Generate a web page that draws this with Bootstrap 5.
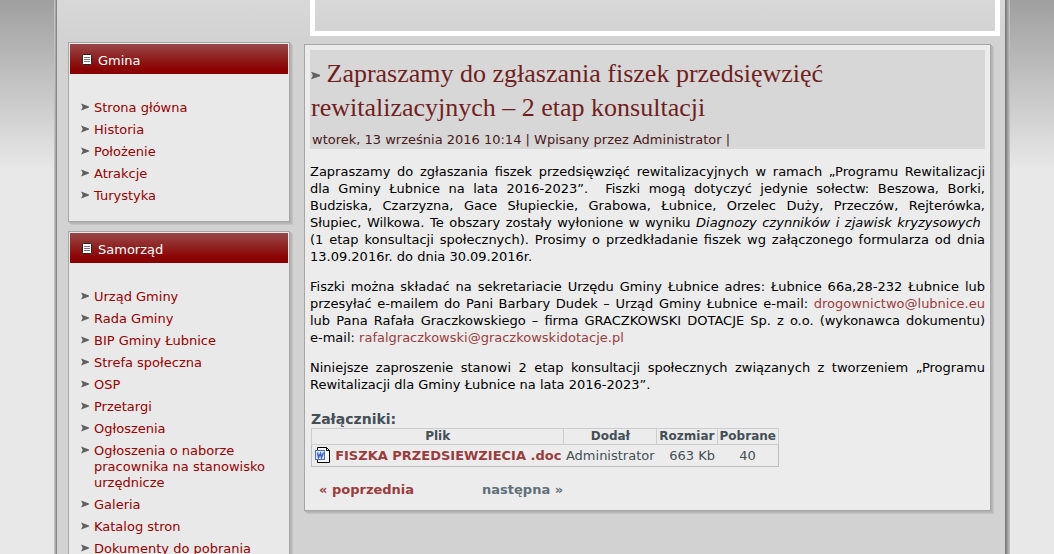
<!DOCTYPE html>
<html lang="pl">
<head>
<meta charset="utf-8">
<meta name="viewport" content="width=device-width, initial-scale=1">
<title>Gmina Łubnice</title>
<link href="https://cdn.jsdelivr.net/npm/bootstrap@5.3.0/dist/css/bootstrap.min.css" rel="stylesheet">
<style>
html::-webkit-scrollbar{display:none}
body{font-family:Verdana,"DejaVu Sans",sans-serif;font-size:13px;line-height:17px;color:#000;background:#e8e8e8 linear-gradient(#9f9f9f,#e8e8e8 170px) no-repeat}
a{color:#9b3c3c;text-decoration:none}
.site{margin:0 49px 0 57px;padding:0 5px 0 11px;min-height:100vh;background:#d2d2d2 linear-gradient(#d8d8d8,#d2d2d2 40px) no-repeat;box-shadow:-1px 0 #868686,-2px 0 #a8a8a8,-3px 0 #c0c0c0,1px 0 #777,2px 0 #8c8c8c,3px 0 #9c9c9c,4px 0 #acacac,5px 0 #bebebe}
.banner{margin-left:242px;height:36px;border:5px solid #fff;border-top:0}
.side{flex:0 0 222px;padding-top:6px}
.box{border:1px solid #a6a6a6;box-shadow:1px 1px #b2b2b2,2px 2px #b9b9b9,3px 3px #c2c2c2}
.side .box{background:#e9e9e9;margin-bottom:9px;padding:1px}
.side h3{height:30px;font-size:13px;line-height:24px;padding:4px 0 0 12px;color:#fff;background:linear-gradient(#974848,#8a0000 85%);margin:0;gap:6px}
.side h3 svg{margin-bottom:3px}
.side ul{padding:26px 8px 16px 11px}
.side li{gap:5px;line-height:16px;margin-bottom:6px}
.side li:last-child{margin-bottom:0}
.side li svg{flex:none;margin-top:3px}
.side li a{color:#990000}
.main-col{padding:8px 9px 0 0;margin-left:14px;min-width:0}
.main-col .box{background:#ececec;padding:5px}
.article-head{background:#d7d7d7;padding:7px 1px 1px;margin-bottom:14px;color:#4a1818}
.article-head h1{font-family:"Palatino Linotype","Liberation Serif",serif;font-size:26px;line-height:34px;font-weight:400;color:#701f1f;margin:0 0 6px}
.article-head h1 svg{vertical-align:2px}
.article-head p{margin:0;padding-left:1px}
.content-text p{text-align:justify;margin-bottom:13px}
.files{color:#444f56}
.files h2{font-size:14px;line-height:18px;font-weight:700;margin:17px 0 0 1px}
.files table{border-collapse:collapse;margin-left:1px;border:1px solid #bdbdbd;width:468px}
.files th{border:1px solid #ccc;text-align:center;font-size:12px;line-height:15px;padding:0 2px}
.files td{line-height:21px;padding:0 2px;white-space:nowrap}
.files td svg{vertical-align:-4px}
.pager{gap:68px;padding:14px 9px 7px;font-weight:700;color:#5f707a}
</style>
</head>
<body>
<svg class="d-none"><symbol id="arrow" viewBox="0 0 7 7"><path d="M0 0.500 7 3v1L0 6.500l1.500-3z" fill="#606060"/></symbol>
<symbol id="page" viewBox="0 0 10 11"><rect x=".5" y=".5" width="9" height="10" rx="1" fill="#fff" stroke="#222"/><path d="M2 3.500h6M2 5.500h6M2 7.500h6" stroke="#777"/></symbol></svg>
<div class="site">
<header class="banner"></header>
<div class="d-flex align-items-start">
<aside class="side">
<nav class="box"><h3 class="d-flex align-items-center"><svg width="10" height="11"><use href="#page"/></svg>Gmina</h3>
<ul class="list-unstyled m-0">
<li class="d-flex"><svg width="8" height="8"><use href="#arrow"/></svg><a href="#">Strona główna</a></li>
<li class="d-flex"><svg width="8" height="8"><use href="#arrow"/></svg><a href="#">Historia</a></li>
<li class="d-flex"><svg width="8" height="8"><use href="#arrow"/></svg><a href="#">Położenie</a></li>
<li class="d-flex"><svg width="8" height="8"><use href="#arrow"/></svg><a href="#">Atrakcje</a></li>
<li class="d-flex"><svg width="8" height="8"><use href="#arrow"/></svg><a href="#">Turystyka</a></li>
</ul></nav>
<nav class="box"><h3 class="d-flex align-items-center"><svg width="10" height="11"><use href="#page"/></svg>Samorząd</h3>
<ul class="list-unstyled m-0">
<li class="d-flex"><svg width="8" height="8"><use href="#arrow"/></svg><a href="#">Urząd Gminy</a></li>
<li class="d-flex"><svg width="8" height="8"><use href="#arrow"/></svg><a href="#">Rada Gminy</a></li>
<li class="d-flex"><svg width="8" height="8"><use href="#arrow"/></svg><a href="#">BIP Gminy Łubnice</a></li>
<li class="d-flex"><svg width="8" height="8"><use href="#arrow"/></svg><a href="#">Strefa społeczna</a></li>
<li class="d-flex"><svg width="8" height="8"><use href="#arrow"/></svg><a href="#">OSP</a></li>
<li class="d-flex"><svg width="8" height="8"><use href="#arrow"/></svg><a href="#">Przetargi</a></li>
<li class="d-flex"><svg width="8" height="8"><use href="#arrow"/></svg><a href="#">Ogłoszenia</a></li>
<li class="d-flex"><svg width="8" height="8"><use href="#arrow"/></svg><a href="#">Ogłoszenia o naborze pracownika na stanowisko urzędnicze</a></li>
<li class="d-flex"><svg width="8" height="8"><use href="#arrow"/></svg><a href="#">Galeria</a></li>
<li class="d-flex"><svg width="8" height="8"><use href="#arrow"/></svg><a href="#">Katalog stron</a></li>
<li class="d-flex"><svg width="8" height="8"><use href="#arrow"/></svg><a href="#">Dokumenty do pobrania</a></li>
</ul></nav>
</aside>
<main class="main-col flex-grow-1"><article class="box">
<div class="article-head">
<h1><svg width="9" height="9" viewBox="0 0 7 7"><use href="#arrow" width="7" height="7"/></svg> Zapraszamy do zgłaszania fiszek przedsięwzięć<br>rewitalizacyjnych – 2 etap konsultacji</h1>
<p>wtorek, 13 września 2016 10:14 | Wpisany przez Administrator |</p>
</div>
<div class="content-text">
<p>Zapraszamy do zgłaszania fiszek przedsięwzięć rewitalizacyjnych w ramach „Programu Rewitalizacji dla Gminy Łubnice na lata 2016-2023”.&nbsp; Fiszki mogą dotyczyć jedynie sołectw: Beszowa, Borki, Budziska, Czarzyzna, Gace Słupieckie, Grabowa, Łubnice, Orzelec Duży, Przeczów, Rejterówka, Słupiec,&nbsp;Wilkowa. Te obszary zostały wyłonione w wyniku <em>Diagnozy czynników i zjawisk kryzysowych</em>&nbsp; (1&nbsp;etap konsultacji społecznych). Prosimy o przedkładanie fiszek wg załączonego formularza od dnia 13.09.2016r. do dnia 30.09.2016r.</p>
<p>Fiszki można składać na sekretariacie Urzędu Gminy Łubnice adres: Łubnice 66a,28-232 Łubnice lub przesyłać e-mailem do Pani Barbary Dudek – Urząd Gminy Łubnice e-mail: <a href="#">drogownictwo@lubnice.eu</a> lub Pana Rafała Graczkowskiego – firma GRACZKOWSKI DOTACJE Sp. z o.o. (wykonawca dokumentu) <span class="text-nowrap">e-mail:</span> <a href="#">rafalgraczkowski@graczkowskidotacje.pl</a></p>
<p>Niniejsze zaproszenie stanowi 2 etap konsultacji społecznych związanych z tworzeniem „Programu Rewitalizacji dla Gminy Łubnice na lata 2016-2023”.</p>
</div>
<section class="files">
<h2>Załączniki:</h2>
<table>
<thead><tr><th>Plik</th><th>Dodał</th><th>Rozmiar</th><th>Pobrane</th></tr></thead>
<tbody><tr><td><svg width="17" height="17" viewBox="0 0 17 17"><path d="M3.500.5h9l3 3v12h-12z" fill="#fff" stroke="#000"/><path d="M12.500.5v3h3" fill="none" stroke="#000"/><rect x="1.500" y="3.500" width="9" height="9" fill="#e3eaff" stroke="#4a70d8"/><path d="m3.500 5.500 1 5 2-4 1 4 2-5" fill="none" stroke="#3d64cc" stroke-width="1.500"/></svg> <a href="#" class="fw-bold">FISZKA PRZEDSIEWZIECIA .doc</a></td><td>Administrator</td><td class="text-end">663 Kb</td><td class="text-center">40</td></tr></tbody>
</table>
</section>
<div class="pager d-flex"><a href="#">« poprzednia</a><span>następna »</span></div>
</article></main>
</div>
</div>
<script src="https://cdn.jsdelivr.net/npm/bootstrap@5.3.0/dist/js/bootstrap.bundle.min.js"></script>
</body>
</html>
